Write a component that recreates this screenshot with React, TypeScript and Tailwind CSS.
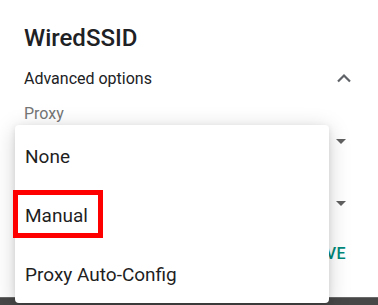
import React from 'react';

const menuItems = ['None', 'Manual', 'Proxy Auto-Config'];

function ChevronUp() {
  return (
    <svg width="16" height="10" viewBox="0 0 16 10" className="text-[#5f6368]">
      <polyline points="2,8.5 8,2.5 14,8.5" fill="none" stroke="currentColor" strokeWidth="2.2" />
    </svg>
  );
}

function Caret() {
  return (
    <svg width="10" height="5" viewBox="0 0 10 5">
      <polygon points="0,0 10,0 5,5" fill="#616161" />
    </svg>
  );
}

export default function App() {
  return (
    <div className="relative w-[378px] h-[305px] overflow-hidden bg-white flex flex-col font-['Roboto',sans-serif]">
      {/* page behind the menu */}
      <div className="flex-1 flex flex-col pl-[24px] pr-[26px] pt-[24px]">
        <h1 className="text-[24px] leading-[28px] font-medium text-[#202124]">WiredSSID</h1>

        <div className="mt-[15px] h-[24px] flex items-center justify-between">
          <span className="text-[16px] leading-[24px] text-[#202124]">Advanced options</span>
          <span className="mt-[-2px]">
            <ChevronUp />
          </span>
        </div>

        <div className="mt-[11px] text-[16px] leading-[24px] text-[#757575]">Proxy</div>

        {/* proxy select, value hidden under the menu */}
        <div className="h-[34px] flex items-center justify-end">
          <span className="mr-[6px] mt-[-4px]">
            <Caret />
          </span>
        </div>

        <div className="mt-[28px] h-[34px] flex items-center justify-end">
          <span className="mr-[6px] mt-[-4px]">
            <Caret />
          </span>
        </div>

        <div className="mt-[22px] flex justify-end pr-[6px]">
          <span className="text-[16px] leading-[20px] font-medium tracking-[0.5px] text-[#00897b]">SAVE</span>
        </div>
      </div>

      {/* dimmed strip at the bottom */}
      <div className="h-[8px] bg-[#474747] border-t border-[#6a6a6a]" />

      {/* open dropdown menu */}
      <div className="absolute left-[15px] top-[125px] w-[314px] h-[178px] pt-[2px] bg-white rounded-[4px] overflow-hidden shadow-[0_4px_22px_rgba(0,0,0,0.18),0_2px_6px_rgba(0,0,0,0.1)]">
        {menuItems.map((item) => (
          <div key={item} className="h-[59px] pl-[10px] flex items-center text-[19px] leading-[59px] text-[#1f1f1f]">
            {item}
          </div>
        ))}
      </div>

      {/* highlight box */}
      <div className="absolute left-[13px] top-[190px] w-[90px] h-[48px] border-[5px] border-[#ff0000]" />
    </div>
  );
}
